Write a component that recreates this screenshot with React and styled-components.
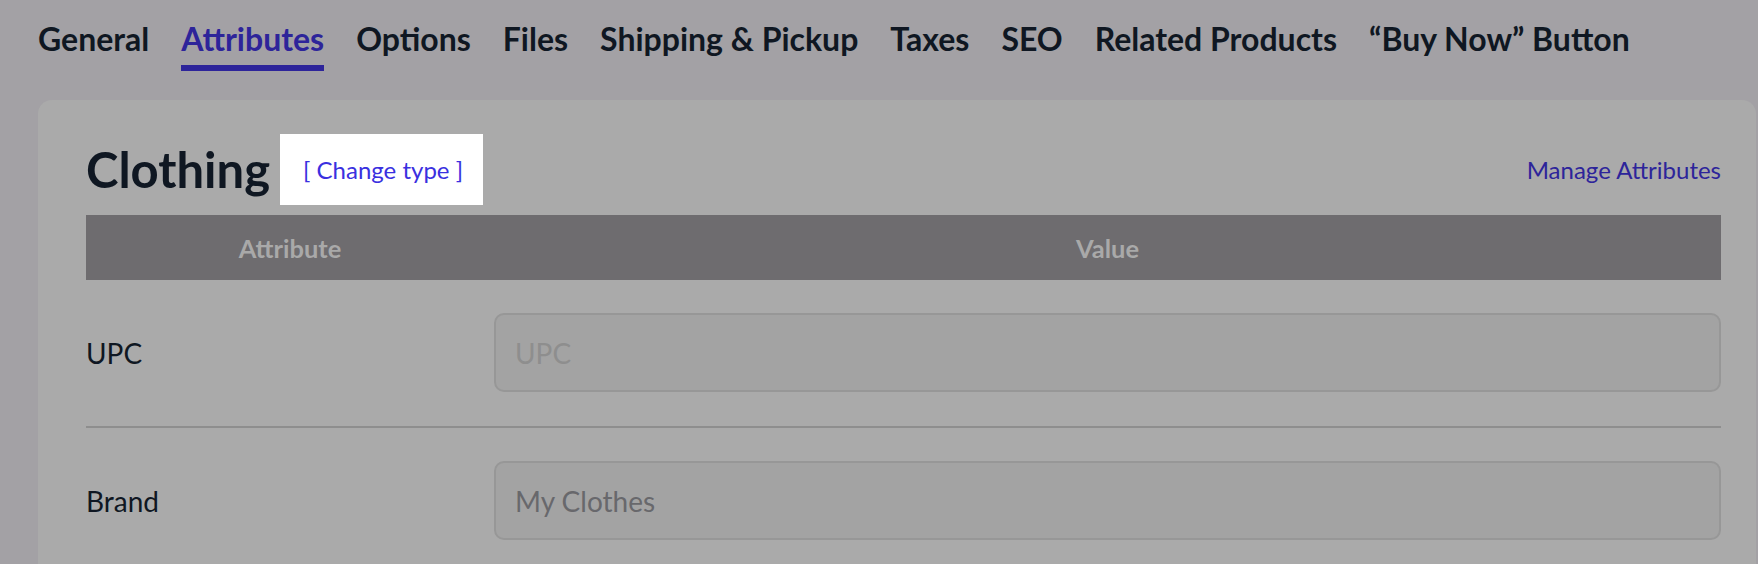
import React from 'react';
import styled, { createGlobalStyle, css } from 'styled-components';

const GlobalStyle = createGlobalStyle`
    html, body {
        margin: 0;
        padding: 0;
        background: #a3a1a5;
        font-family: Lato, "Noto Sans", sans-serif;
        color: #0f1722;
    }
`;

const Page = styled.div`
    padding: 0 2px 0 38px;
    height: 564px;
    overflow: hidden;
`;

const Tabs = styled.ul`
    list-style: none;
    margin: 0;
    padding: 20px 0 0;
    display: flex;
    gap: 32px;
`;

const Tab = styled.li`
    font-size: 32px;
    font-weight: 700;
    line-height: 1.2;
    padding-bottom: 7px;
    border-bottom: 6px solid transparent;
    color: #0f1722;

    ${props => props.active && css`
        color: #2d249a;
        border-bottom-color: #2d249a;
    `}
`;

const Card = styled.section`
    margin-top: 29px;
    background: #aaaaaa;
    border-radius: 14px 14px 0 0;
    padding: 34px 35px 0 48px;
    min-height: 500px;
`;

const TitleRow = styled.div`
    display: flex;
    align-items: center;
    justify-content: space-between;
    margin-bottom: 10px;
`;

const TitleGroup = styled.div`
    display: flex;
    align-items: center;
    gap: 10px;
`;

const Title = styled.h2`
    margin: 0;
    font-size: 49px;
    font-weight: 700;
    line-height: 1.2;
    color: #0f1722;
`;

const Highlight = styled.div`
    background: #ffffff;
    padding: 21px 20px 21px 23px;
    font-size: 24px;
    line-height: 29px;
    color: #3a30df;
`;

const Link = styled.a`
    font-size: 24px;
    color: #2d249a;
    text-decoration: none;
`;

const Table = styled.div`
    display: grid;
    grid-template-columns: 408px 1fr;
`;

const HeadCell = styled.div`
    background: #6e6c6f;
    color: #a9a9a9;
    font-size: 25.5px;
    font-weight: 700;
    height: 65px;
    display: flex;
    align-items: center;
    justify-content: center;
`;

const Row = styled.div`
    grid-column: 1 / -1;
    display: grid;
    grid-template-columns: 408px 1fr;
    align-items: center;
    padding: 33px 0 34px;
    border-bottom: 2px solid #8e8e8e;

    &:last-child {
        border-bottom: none;
    }
`;

const Label = styled.div`
    font-size: 28px;
    color: #0f1722;
`;

const Input = styled.div`
    height: 79px;
    box-sizing: border-box;
    border: 2px solid #979797;
    border-radius: 10px;
    background: #a3a3a3;
    padding: 0 19px;
    display: flex;
    align-items: center;
    font-size: 28px;
    color: ${props => (props.placeholder ? '#8e8e8e' : '#68686c')};
`;

const tabs = ['General', 'Attributes', 'Options', 'Files', 'Shipping & Pickup', 'Taxes', 'SEO', 'Related Products', '\u201cBuy Now\u201d Button'];

const rows = [
    { label: 'UPC', value: 'UPC', placeholder: true },
    { label: 'Brand', value: 'My Clothes' },
];

const App = () => {
    return (
        <>
            <GlobalStyle />
            <Page>
                <Tabs>
                    {tabs.map(tab => (
                        <Tab key={tab} active={tab === 'Attributes'}>{tab}</Tab>
                    ))}
                </Tabs>
                <Card>
                    <TitleRow>
                        <TitleGroup>
                            <Title>Clothing</Title>
                            <Highlight>[ Change type ]</Highlight>
                        </TitleGroup>
                        <Link href="#">Manage Attributes</Link>
                    </TitleRow>
                    <Table>
                        <HeadCell>Attribute</HeadCell>
                        <HeadCell>Value</HeadCell>
                        {rows.map(row => (
                            <Row key={row.label}>
                                <Label>{row.label}</Label>
                                <Input placeholder={row.placeholder}>{row.value}</Input>
                            </Row>
                        ))}
                    </Table>
                </Card>
            </Page>
        </>
    );
};

export default App;
